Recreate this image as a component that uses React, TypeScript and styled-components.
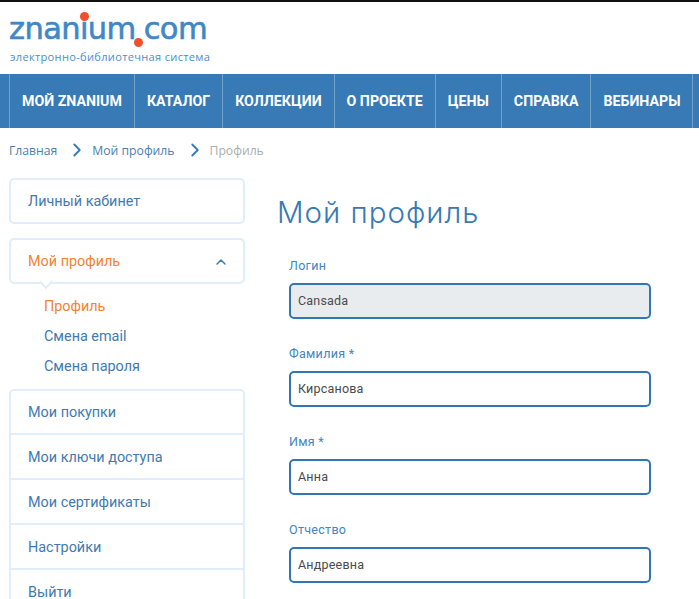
import React from "react";
import styled, { createGlobalStyle } from "styled-components";
import { ChevronRight, ChevronUp } from "lucide-react";

const GlobalStyle = createGlobalStyle`
  html, body {
    margin: 0;
    padding: 0;
    height: 100%;
    overflow: hidden;
    background: #fff;
    font-family: Roboto, "Liberation Sans", sans-serif;
  }
  * { box-sizing: border-box; }
`;

const Page = styled.div`
  width: 699px;
  height: 599px;
  overflow: hidden;
  border-top: 2px solid #111;
`;

const Header = styled.header`
  height: 72px;
  padding: 9px 0 0 9px;
`;

const Logo = styled.div`
  position: relative;
  width: 202px;
  height: 36px;
  font-family: "DejaVu Sans", sans-serif;
  font-size: 30.5px;
  line-height: 36px;
  letter-spacing: -0.6px;
  color: #3f88c8;
  -webkit-text-stroke: 0.6px #3f88c8;
  white-space: nowrap;
`;

const LogoDot = styled.span<{ $left: number; $top: number }>`
  position: absolute;
  left: ${(p) => p.$left}px;
  top: ${(p) => p.$top}px;
  width: 9px;
  height: 9px;
  border-radius: 50%;
  background: #ee4f2d;
`;

const LogoCom = styled.span`
  margin-left: 8px;
`;

const Tagline = styled.div`
  margin: 3px 0 0 1px;
  font-family: "Open Sans", sans-serif;
  font-size: 11.1px;
  line-height: 14px;
  letter-spacing: 0.3px;
  color: #4b8fcb;
`;

const Nav = styled.nav`
  height: 54px;
  background: #377ab5;
  padding-left: 9px;
  display: flex;
`;

const NavItem = styled.a`
  display: flex;
  align-items: center;
  padding: 0 12px;
  border-left: 1px solid rgba(255, 255, 255, 0.3);
  color: #fff;
  font-size: 14.2px;
  font-weight: 700;
  white-space: nowrap;
  &:last-child {
    border-right: 1px solid rgba(255, 255, 255, 0.3);
  }
`;

const Breadcrumbs = styled.div`
  height: 50px;
  padding: 0 0 6px 9px;
  display: flex;
  align-items: center;
  gap: 4px;
  font-family: "Open Sans", sans-serif;
  font-size: 12.2px;
  color: #4a7fae;
`;

const Crumb = styled.span<{ $current?: boolean }>`
  color: ${(p) => (p.$current ? "#a9adb1" : "#4a7fae")};
`;

const CrumbArrow = styled(ChevronRight)`
  color: #377ab5;
  width: 22px;
  height: 22px;
  margin-left: 5px;
  stroke-width: 2;
`;

const Main = styled.main`
  display: flex;
  align-items: flex-start;
  padding: 0 0 0 9px;
`;

const Sidebar = styled.aside`
  width: 236px;
  flex: none;
  display: flex;
  flex-direction: column;
`;

const Box = styled.div`
  border: 2px solid #e0edfa;
  border-radius: 5px;
  overflow: hidden;
`;

const MenuBox = styled(Box)`
  margin-top: 14px;
  position: relative;
  overflow: visible;
`;

const MenuRow = styled.a<{ $active?: boolean }>`
  display: flex;
  align-items: center;
  justify-content: space-between;
  height: 42px;
  padding: 0 14px 0 17px;
  font-size: 14.4px;
  color: ${(p) => (p.$active ? "#f58233" : "#3f7ab0")};
  & + & {
    height: 45px;
    padding-top: 2px;
    border-top: 2px solid #e0edfa;
  }
`;

const Pointer = styled.span`
  position: absolute;
  left: 30px;
  bottom: -5px;
  width: 10px;
  height: 10px;
  background: #fff;
  border-right: 2px solid #e0edfa;
  border-bottom: 2px solid #e0edfa;
  transform: rotate(45deg);
`;

const UpIcon = styled(ChevronUp)`
  width: 16px;
  height: 16px;
  margin-top: 2px;
  color: #3f7ab0;
  stroke-width: 2.2;
`;

const SubMenu = styled.div`
  display: flex;
  flex-direction: column;
  padding: 7px 0 8px 35px;
`;

const SubItem = styled.a<{ $active?: boolean }>`
  height: 30px;
  display: flex;
  align-items: center;
  font-size: 14.4px;
  color: ${(p) => (p.$active ? "#f58233" : "#3f7ab0")};
`;

const Content = styled.section`
  margin-left: 32px;
  width: 374px;
`;

const Title = styled.h1`
  margin: 15px 0 0;
  height: 38px;
  font-family: Inter, sans-serif;
  font-size: 29.5px;
  line-height: 38px;
  font-weight: 300;
  letter-spacing: 1px;
  color: #377ab5;
`;

const Form = styled.form`
  margin-top: 26px;
  padding-left: 12px;
  display: flex;
  flex-direction: column;
  gap: 26px;
`;

const Field = styled.label`
  display: flex;
  flex-direction: column;
  gap: 8px;
`;

const FieldLabel = styled.span`
  font-size: 12.5px;
  line-height: 18px;
  height: 18px;
  letter-spacing: 0.3px;
  color: #4484bf;
`;

const Input = styled.input`
  width: 362px;
  height: 36px;
  padding: 0 7px 1px;
  border: 2px solid #3277b3;
  border-radius: 5px;
  background: #fff;
  outline: none;
  font-family: Roboto, sans-serif;
  font-size: 12.5px;
  letter-spacing: 0.2px;
  color: #4a4a4a;
  &:disabled {
    background: #e9ecef;
    color: #4a4a4a;
    opacity: 1;
  }
`;

const navItems = ["МОЙ ZNANIUM", "КАТАЛОГ", "КОЛЛЕКЦИИ", "О ПРОЕКТЕ", "ЦЕНЫ", "СПРАВКА", "ВЕБИНАРЫ"];
const menuItems = ["Мои покупки", "Мои ключи доступа", "Мои сертификаты", "Настройки", "Выйти"];
const fields = [
  { label: "Логин", value: "Cansada", disabled: true },
  { label: "Фамилия *", value: "Кирсанова" },
  { label: "Имя *", value: "Анна" },
  { label: "Отчество", value: "Андреевна" },
];

export default function App() {
  return (
    <Page>
      <GlobalStyle />
      <Header>
        <Logo>
          znanium<LogoCom>com</LogoCom>
          <LogoDot $left={71} $top={1} />
          <LogoDot $left={125} $top={27} />
        </Logo>
        <Tagline>электронно-библиотечная система</Tagline>
      </Header>
      <Nav>
        {navItems.map((item) => (
          <NavItem key={item}>{item}</NavItem>
        ))}
      </Nav>
      <Breadcrumbs>
        <Crumb>Главная</Crumb>
        <CrumbArrow />
        <Crumb>Мой профиль</Crumb>
        <CrumbArrow />
        <Crumb $current>Профиль</Crumb>
      </Breadcrumbs>
      <Main>
        <Sidebar>
          <Box>
            <MenuRow>Личный кабинет</MenuRow>
          </Box>
          <MenuBox>
            <MenuRow $active>
              Мой профиль
              <UpIcon />
            </MenuRow>
            <Pointer />
          </MenuBox>
          <SubMenu>
            <SubItem $active>Профиль</SubItem>
            <SubItem>Смена email</SubItem>
            <SubItem>Смена пароля</SubItem>
          </SubMenu>
          <Box>
            {menuItems.map((item) => (
              <MenuRow key={item}>{item}</MenuRow>
            ))}
          </Box>
        </Sidebar>
        <Content>
          <Title>Мой профиль</Title>
          <Form>
            {fields.map((f) => (
              <Field key={f.label}>
                <FieldLabel>{f.label}</FieldLabel>
                <Input defaultValue={f.value} disabled={f.disabled} />
              </Field>
            ))}
          </Form>
        </Content>
      </Main>
    </Page>
  );
}
